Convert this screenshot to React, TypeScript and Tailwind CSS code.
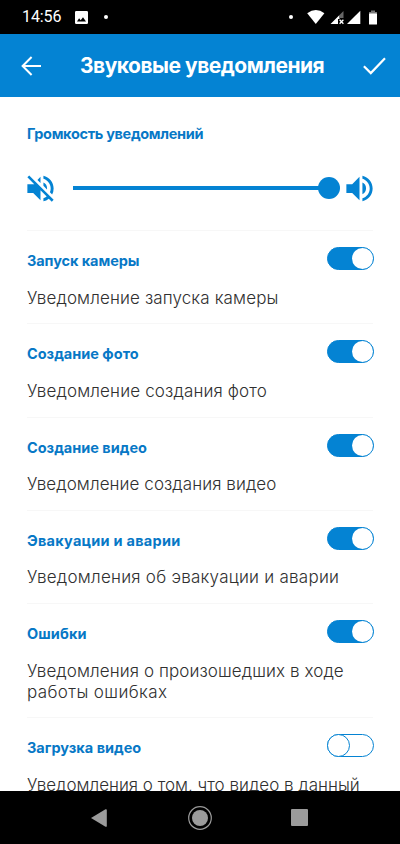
import { useState } from "react";
import clsx from "clsx";
import { MdVolumeOff, MdVolumeUp } from "react-icons/md";

type Line = { text: string; className?: string };
type Setting = {
  id: string;
  title: string;
  titleClass?: string;
  lines: Line[];
  enabled: boolean;
};

const SETTINGS: Setting[] = [
  {
    id: "camera",
    title: "Запуск камеры",
    titleClass: "tracking-[-0.08px]",
    lines: [{ text: "Уведомление запуска камеры", className: "tracking-[0.12px]" }],
    enabled: true,
  },
  {
    id: "photo",
    title: "Создание фото",
    lines: [{ text: "Уведомление создания фото", className: "tracking-[0.14px]" }],
    enabled: true,
  },
  {
    id: "video",
    title: "Создание видео",
    lines: [{ text: "Уведомление создания видео", className: "tracking-[0.07px]" }],
    enabled: true,
  },
  {
    id: "alarm",
    title: "Эвакуации и аварии",
    titleClass: "tracking-[0.25px]",
    lines: [{ text: "Уведомления об эвакуации и аварии", className: "tracking-[0.25px]" }],
    enabled: true,
  },
  {
    id: "errors",
    title: "Ошибки",
    titleClass: "tracking-[0.1px]",
    lines: [
      { text: "Уведомления о произошедших в ходе", className: "tracking-[0.09px]" },
      { text: "работы ошибках", className: "tracking-[0.38px]" },
    ],
    enabled: true,
  },
  {
    id: "upload",
    title: "Загрузка видео",
    lines: [{ text: "Уведомления о том, что видео в данный" }],
    enabled: false,
  },
];

export default function App() {
  const [enabled, setEnabled] = useState<Record<string, boolean>>(() =>
    Object.fromEntries(SETTINGS.map((s) => [s.id, s.enabled])),
  );

  return (
    <div className="flex h-[844px] w-[400px] flex-col overflow-hidden bg-white font-['Inter',sans-serif]">
      <StatusBar />
      <header className="flex h-[63px] shrink-0 items-center bg-[#0483d3] pr-[14px] pl-[21px] text-white">
        <button type="button" aria-label="Назад" className="shrink-0">
          <svg width="21" height="20" viewBox="0 0 21 20" fill="none" stroke="currentColor" strokeWidth="2">
            <path d="M20 10H1.6M10.6 1 1.6 10l9 9" />
          </svg>
        </button>
        <h1 className="ml-[38px] flex-1 text-[21px] leading-[28px] font-bold tracking-[-0.5px] whitespace-nowrap">
          Звуковые уведомления
        </h1>
        <button type="button" aria-label="Сохранить" className="shrink-0">
          <svg width="23" height="18" viewBox="0 0 23 18" fill="none" stroke="currentColor" strokeWidth="2.2">
            <path d="M.9 9.2l6.9 6.9L22 1.3" />
          </svg>
        </button>
      </header>

      <main className="flex min-h-0 flex-1 flex-col overflow-hidden px-[27px]">
        <section className="h-[134px] shrink-0 border-b border-[#f7f7f7] pt-[27px]">
          <h2 className="text-[14.5px] leading-[20px] font-bold tracking-[-0.33px] whitespace-nowrap text-[#0778c6]">
            Громкость уведомлений
          </h2>
          <div className="-mx-[4.4px] mt-[26.5px] flex items-center text-[#0483d3]">
            <MdVolumeOff size={35} className="shrink-0" />
            <div className="ml-[15.4px] flex flex-1 items-center">
              <div className="h-[4px] flex-1 bg-[#0483d3]" />
              <div className="-ml-[1px] size-[22px] rounded-full bg-[#0483d3]" />
            </div>
            <MdVolumeUp size={35} className="ml-[2.4px] shrink-0" />
          </div>
        </section>

        {SETTINGS.map((s) => (
          <section
            key={s.id}
            className={clsx(
              "shrink-0 border-b border-[#f7f7f7] pt-[16px]",
              s.lines.length > 1 ? "h-[114px]" : "h-[93.3px]",
            )}
          >
            <div className="flex h-[27px] items-start justify-between">
              <h2
                className={clsx(
                  "pt-[4px] text-[14.5px] leading-[20px] font-bold whitespace-nowrap text-[#0778c6]",
                  s.titleClass,
                )}
              >
                {s.title}
              </h2>
              <Toggle
                label={s.title}
                on={enabled[s.id]}
                onChange={() => setEnabled((prev) => ({ ...prev, [s.id]: !prev[s.id] }))}
              />
            </div>
            <p className="mt-[13.5px] text-[17px] leading-[21px] font-light whitespace-nowrap text-[#303030]">
              {s.lines.map((line) => (
                <span key={line.text} className={clsx("block", line.className)}>
                  {line.text}
                </span>
              ))}
            </p>
          </section>
        ))}
      </main>

      <NavBar />
    </div>
  );
}

function Toggle({ label, on, onChange }: { label: string; on: boolean; onChange: () => void }) {
  return (
    <button
      type="button"
      role="switch"
      aria-checked={on}
      aria-label={label}
      onClick={onChange}
      className={clsx(
        "-mr-[0.5px] flex h-[23px] w-[47px] shrink-0 rounded-full border border-[#0483d3]",
        on ? "justify-end bg-[#0483d3]" : "justify-start bg-white",
      )}
    >
      <span
        className={clsx(
          "rounded-full bg-white",
          on ? "size-[21px]" : "-mt-px -ml-px size-[23px] border border-[#0483d3]",
        )}
      />
    </button>
  );
}

function StatusBar() {
  return (
    <div className="flex h-[34px] shrink-0 items-center bg-black pr-[22px] pl-[22px] text-white">
      <span className="font-['Roboto',sans-serif] text-[16px] leading-[20px] tracking-[-0.1px]">14:56</span>
      <svg className="ml-[14px]" width="13" height="13" viewBox="0 0 13 13">
        <path
          fill="currentColor"
          fillRule="evenodd"
          d="M1.3 0h10.4Q13 0 13 1.3v10.4q0 1.3-1.3 1.3H1.3Q0 13 0 11.7V1.3Q0 0 1.3 0zM2 10.5h9L8 6.3l-2.3 3-1.6-2z"
        />
      </svg>
      <span className="ml-[16px] size-[4px] rounded-full bg-white" />
      <div className="flex-1" />
      <span className="mr-[14px] size-[4px] rounded-full bg-white" />
      {/* wifi, two sim signals, battery */}
      <svg width="71" height="16" viewBox="0 0 71 16">
        <path fill="#fff" d="M.2 4.2Q9-2.3 17.4 4.2L8.8 15z" />
        <path fill="#fff" d="M23.5 15 32.5 6v4H31v5z" />
        <path fill="#666" d="M32.5 6 36.5 2v7h-4z" />
        <path stroke="#fff" strokeWidth="1.3" d="M32.6 10.8 36.4 14.8M36.4 10.8 32.6 14.8" />
        <path fill="#fff" d="M40 15 53.3 1.7V15z" />
        <path fill="#777" d="M64 1.5h4V3h2v2h-8V3h2z" />
        <rect fill="#fff" x="62" y="4.5" width="8" height="11" rx=".6" />
      </svg>
    </div>
  );
}

function NavBar() {
  return (
    <nav className="flex h-[53px] shrink-0 items-center justify-between bg-black pr-[92px] pl-[91px] text-[#9b9b9b]">
      <svg width="16" height="18" viewBox="0 0 16 18">
        <path fill="currentColor" d="M0 9 14.5.3q1.3-.5 1.3.8v15.8q0 1.3-1.3.8z" />
      </svg>
      <svg className="ml-px" width="24" height="24" viewBox="0 0 24 24">
        <circle cx="12" cy="12" r="11.3" fill="none" stroke="currentColor" strokeWidth="1.2" />
        <circle cx="12" cy="12" r="8" fill="currentColor" />
      </svg>
      <span className="size-[17px] rounded-[1px] bg-[#9b9b9b]" />
    </nav>
  );
}
